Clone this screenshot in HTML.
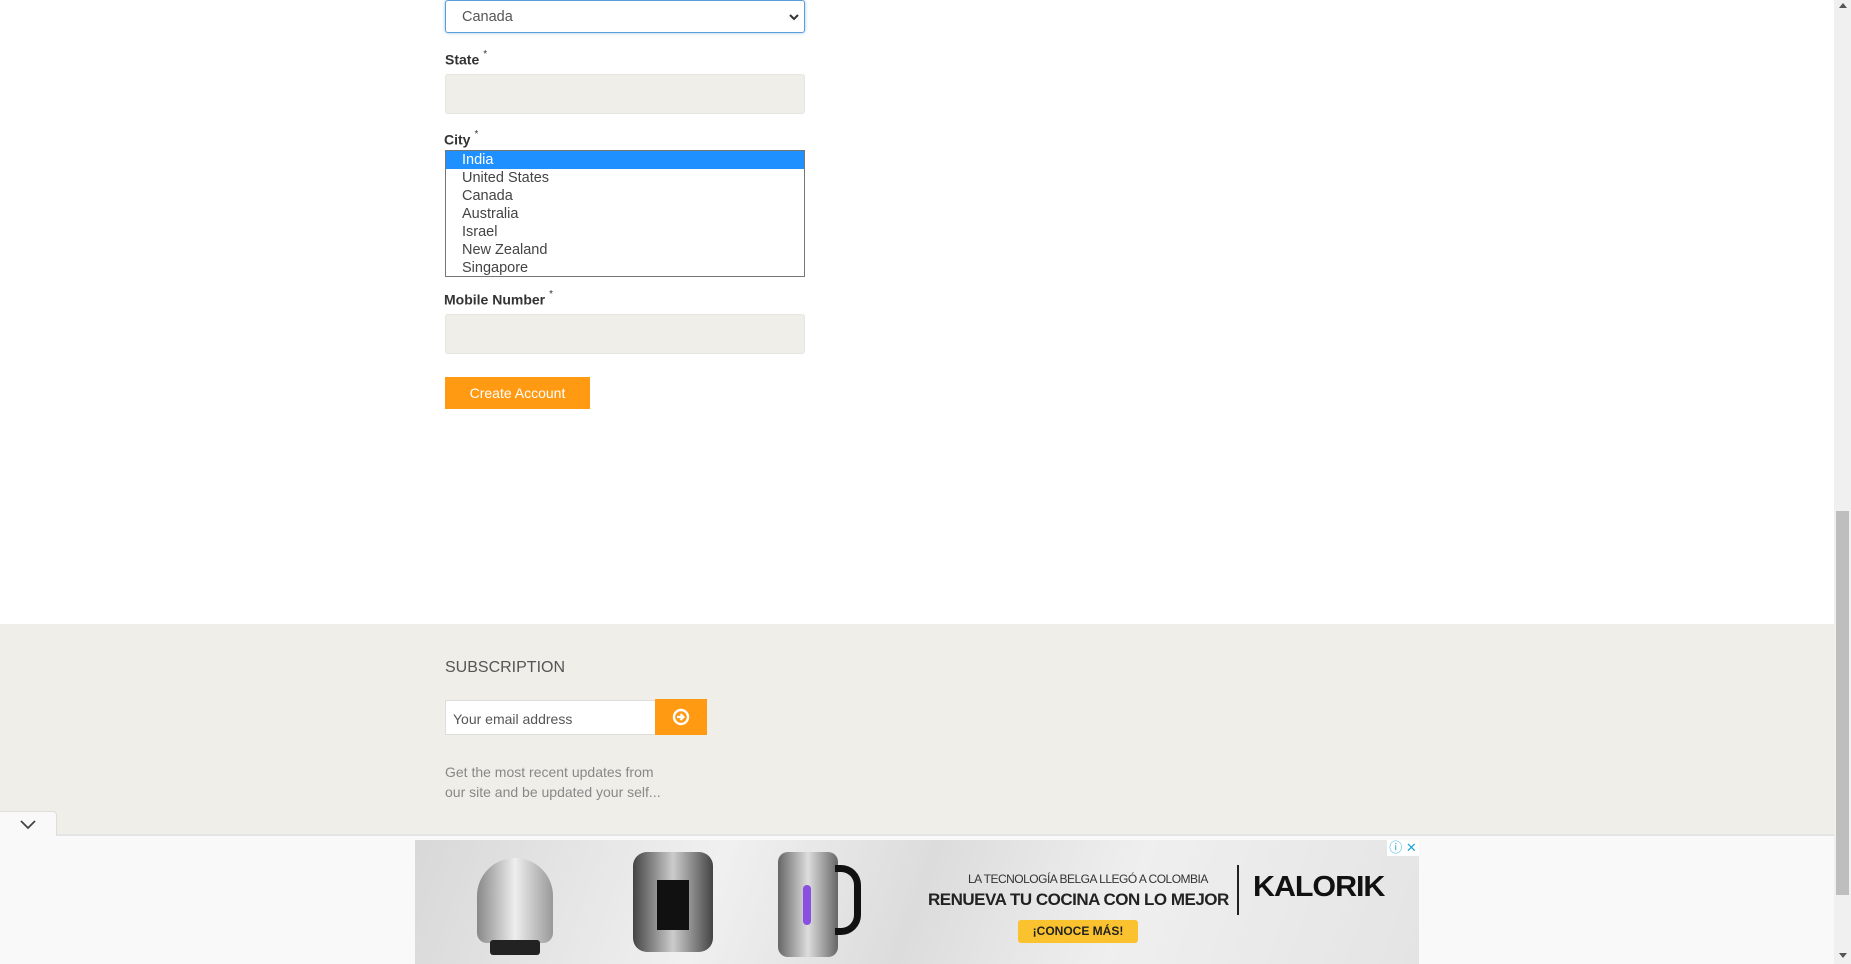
<!DOCTYPE html>
<html><head><meta charset="utf-8"><style>
*{box-sizing:border-box;margin:0;padding:0}
body{width:1851px;height:964px;overflow:hidden;background:#fff;font-family:"Liberation Sans",Arial,sans-serif;position:relative}
.abs{position:absolute;white-space:nowrap}
.lbl{position:absolute;left:445px;font-weight:bold;font-size:14px;color:#333}
.lbl sup{font-weight:normal;font-size:10px;margin-left:4px;position:relative;top:-2px}
.inp{position:absolute;left:445px;width:360px;height:40px;background:#efeee8;border:1px solid #e6e5df;border-radius:3px}
.opt{height:18px;line-height:18px;font-size:14.5px;color:#444;padding-left:16px}
</style></head><body>
<div class="abs" style="left:445px;top:0;width:360px;height:33px;border:1px solid #5b9dd9;border-radius:3px;box-shadow:0 0 3px #9cc3ea;font-size:14.5px;color:#555;padding:8px 0 0 16px">Canada
<svg class="abs" style="right:4px;top:11px" width="12" height="10" viewBox="0 0 12 10"><path d="M2 3 L6 7 L10 3" fill="none" stroke="#333" stroke-width="2"/></svg></div>
<div class="lbl" style="top:51px">State<sup>*</sup></div>
<div class="inp" style="top:74px"></div>
<div class="lbl" style="top:131px;left:444px">City<sup>*</sup></div>
<div class="abs" style="left:445px;top:150px;width:360px;height:127px;border:1px solid #767676;background:#fff">
<div class="opt" style="background:#1e90ff;color:#fff">India</div>
<div class="opt">United States</div><div class="opt">Canada</div><div class="opt">Australia</div><div class="opt">Israel</div><div class="opt">New Zealand</div><div class="opt">Singapore</div></div>
<div class="lbl" style="top:291px;left:444px">Mobile Number<sup>*</sup></div>
<div class="inp" style="top:314px"></div>
<div class="abs" style="left:445px;top:377px;width:145px;height:32px;background:#ff9a12;color:#fff;font-size:14px;text-align:center;line-height:32px">Create Account</div>

<div class="abs" style="left:0;top:624px;width:1834px;height:210px;background:#efeee8"></div>
<div class="abs" style="left:445px;top:659px;font-size:16px;color:#555">SUBSCRIPTION</div>
<div class="abs" style="left:445px;top:700px;width:211px;height:35px;background:#fff;border:1px solid #ddd;font-size:14px;color:#555;padding:10px 0 0 7px">Your email address</div>
<div class="abs" style="left:655px;top:699px;width:52px;height:36px;background:#ff9a12">
<svg class="abs" style="left:17px;top:9px" width="18" height="18" viewBox="0 0 18 18"><circle cx="9" cy="9" r="7" fill="none" stroke="#fff" stroke-width="2.4"/><path d="M5 9 H11 M8.5 6 L11.5 9 L8.5 12" fill="none" stroke="#fff" stroke-width="2.2"/></svg></div>
<div class="abs" style="left:445px;top:762px;font-size:14px;line-height:20px;color:#888">Get the most recent updates from<br>our site and be updated your self...</div>
<div class="abs" style="left:0;top:834px;width:1834px;height:130px;background:#f9f9f9;border-top:2px solid #e4e4e4"></div>
<div class="abs" style="left:0;top:811px;width:57px;height:25px;background:#f9f9f9;border-top:1px solid #ddd;border-right:1px solid #ddd;border-radius:0 4px 0 0">
<svg class="abs" style="left:20px;top:8px" width="16" height="10" viewBox="0 0 16 10"><path d="M1 1 L8 8 L15 1" fill="none" stroke="#444" stroke-width="1.8"/></svg></div>

<div class="abs" style="left:415px;top:840px;width:1004px;height:124px;background:linear-gradient(110deg,#d8d8d8,#f0f0f0 30%,#dcdcdc 50%,#efefef 70%,#e4e4e4)">
<div class="abs" style="left:62px;top:18px;width:76px;height:85px;border-radius:38px 38px 10px 10px;background:linear-gradient(90deg,#888,#eee,#999)"></div>
<div class="abs" style="left:75px;top:100px;width:50px;height:15px;background:#222;border-radius:3px"></div>
<div class="abs" style="left:218px;top:12px;width:80px;height:100px;border-radius:14px;background:linear-gradient(90deg,#444,#ccc,#444)"></div>
<div class="abs" style="left:242px;top:40px;width:32px;height:50px;background:#111"></div>
<div class="abs" style="left:363px;top:12px;width:60px;height:105px;border-radius:10px;background:linear-gradient(90deg,#666,#ddd,#666)"></div>
<div class="abs" style="left:420px;top:25px;width:26px;height:70px;border:7px solid #111;border-left:none;border-radius:0 20px 20px 0"></div>
<div class="abs" style="left:388px;top:45px;width:8px;height:40px;background:#8a4fe0;border-radius:4px"></div>
<div class="abs" style="left:553px;top:32px;font-size:12px;color:#333;letter-spacing:-0.5px">LA TECNOLOGÍA BELGA LLEGÓ A COLOMBIA</div>
<div class="abs" style="left:513px;top:50px;font-size:17px;font-weight:bold;color:#222;letter-spacing:-0.5px">RENUEVA TU COCINA CON LO MEJOR</div>
<div class="abs" style="left:822px;top:25px;width:2px;height:50px;background:#222"></div>
<div class="abs" style="left:838px;top:31px;font-size:29px;font-weight:bold;color:#111;letter-spacing:-1px;transform:scaleX(1.05);transform-origin:left">KALORIK</div>
<div class="abs" style="left:603px;top:80px;width:120px;height:23px;background:#f9c22e;border-radius:3px;font-size:12px;font-weight:bold;text-align:center;line-height:23px;color:#222">¡CONOCE MÁS!</div>
<div class="abs" style="left:972px;top:0;width:32px;height:16px;background:#fff;color:#1ea7d8;font-size:13px;text-align:center;line-height:16px">ⓘ ✕</div>
</div>

<div class="abs" style="left:1834px;top:0;width:17px;height:964px;background:#f0f0f0">
<div class="abs" style="left:2px;top:511px;width:13px;height:384px;background:#bebebe"></div>
<div class="abs" style="left:5px;top:3px;border-left:4px solid transparent;border-right:4px solid transparent;border-bottom:5px solid #555"></div>
<div class="abs" style="left:5px;top:953px;border-left:4px solid transparent;border-right:4px solid transparent;border-top:5px solid #555"></div>
</div>
</body></html>
